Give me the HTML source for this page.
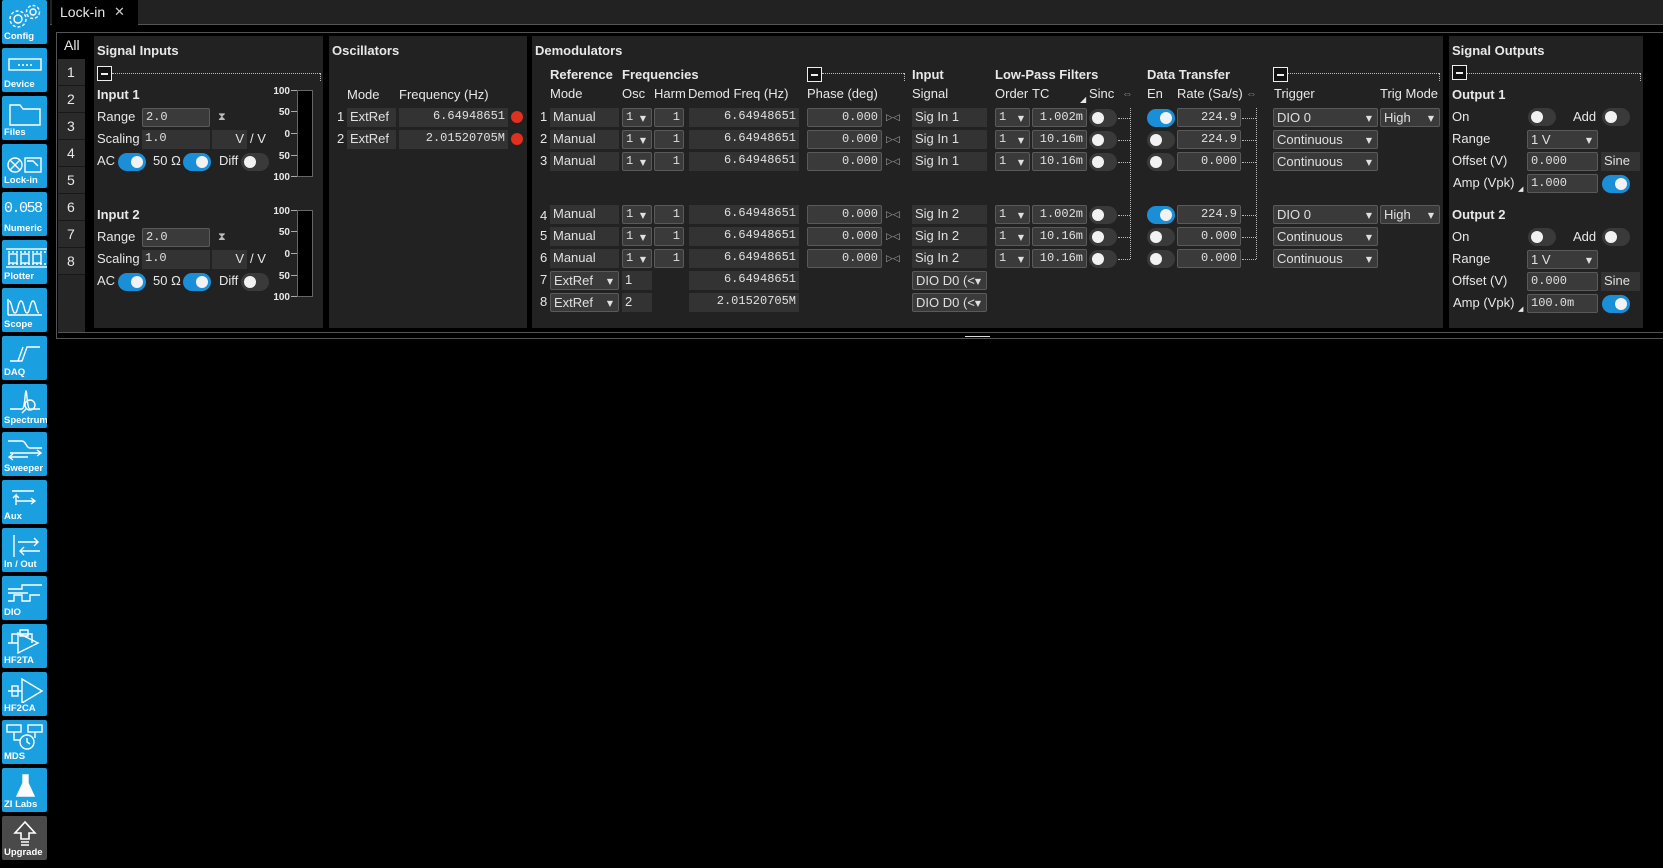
<!DOCTYPE html>
<html><head><meta charset="utf-8"><style>
*{box-sizing:border-box;margin:0;padding:0}
body{width:1663px;height:868px;background:#000;overflow:hidden;position:relative;font-family:"Liberation Sans",Arial,sans-serif;font-size:13px;color:#e8e8e8}
div,span{position:absolute}
.t{white-space:nowrap;line-height:16px}
.b{font-weight:bold}
.f{background:#3a3a3a;border:1px solid #5a5a5a;border-radius:2px;height:19px;font-family:"Liberation Mono",monospace;font-size:12px;line-height:17px;padding:0 3px;color:#e0e0e0;white-space:nowrap;overflow:hidden}
.s{font-family:"Liberation Sans",Arial,sans-serif;font-size:13px}
.p{background:#333;height:19px;line-height:17px;padding:0 3px;white-space:nowrap;color:#e0e0e0}
.m{font-family:"Liberation Mono",monospace;font-size:12px}
.r{text-align:right}
.dd:after{content:"▼";position:absolute;right:5px;top:1px;font-size:8px;font-family:"DejaVu Sans",sans-serif;background:inherit}
.tg{width:28px;height:18px;border-radius:9px;background:#3a3a3a}
.tg:after{content:"";position:absolute;top:3px;left:3px;width:12px;height:12px;border-radius:6px;background:#f2f2f2}
.on{background:#1a8fd8}
.on:after{left:13px}
.pn{background:#222}
.cb{width:15px;height:15px;border:1.5px solid #eee;background:#111}
.cb:after{content:"";position:absolute;left:3px;top:6px;width:7px;height:1.5px;background:#eee}
.dl{border-top:1px dotted #bbb;height:0}
.dv{border-left:1px dotted #bbb;width:0}
.ic{left:2px;width:45px;height:44px;background:#1a9fe0;border-radius:2px;overflow:hidden}
.ic span.l{left:2px;bottom:2px;font-size:9.5px;font-weight:bold;color:#fff;line-height:10px}
.ic svg{position:absolute;left:4px;top:3px}
.dot{width:12px;height:12px;border-radius:6px;background:#e03020}
.ax{font-size:10px;font-weight:bold;text-align:right;width:20px}
</style></head><body>
<!-- sidebar -->
<div class="ic" style="top:0"><svg width="38" height="28" fill="none" stroke="#fff" stroke-width="1.4"><circle cx="12" cy="16" r="4"/><circle cx="12" cy="16" r="8" stroke-dasharray="3 2"/><circle cx="27" cy="9" r="3"/><circle cx="27" cy="9" r="6.5" stroke-dasharray="3 2"/></svg><span class="l">Config</span></div>
<div class="ic" style="top:48px"><svg width="38" height="28" fill="none" stroke="#fff" stroke-width="1.4"><rect x="3" y="8" width="32" height="11"/><path d="M12 14h2M16 14h2M20 14h2M24 14h2"/></svg><span class="l">Device</span></div>
<div class="ic" style="top:96px"><svg width="38" height="28" fill="none" stroke="#fff" stroke-width="1.4"><path d="M4 6h10l3 4h17v16H4z"/></svg><span class="l">Files</span></div>
<div class="ic" style="top:144px"><svg width="38" height="28" fill="none" stroke="#fff" stroke-width="1.4"><circle cx="9" cy="18" r="7"/><path d="M4 13l10 10M14 13L4 23"/><rect x="19" y="11" width="16" height="14"/><path d="M21 14h6l5 5"/></svg><span class="l">Lock-in</span></div>
<div class="ic" style="top:192px"><span style="left:2px;top:8px;font-family:'Liberation Mono',monospace;font-size:15px;color:#fff;letter-spacing:-1.5px">0.058</span><span class="l">Numeric</span></div>
<div class="ic" style="top:240px"><svg width="42" height="28" fill="none" stroke="#fff" stroke-width="1.4"><rect x="-2" y="6" width="44" height="18"/><path d="M-2 9h44M-2 21h44" stroke-dasharray="2 2"/><rect x="3" y="11" width="8" height="9"/><rect x="15" y="11" width="8" height="9"/><rect x="27" y="11" width="8" height="9"/></svg><span class="l">Plotter</span></div>
<div class="ic" style="top:288px"><svg width="38" height="28" fill="none" stroke="#fff" stroke-width="1.4"><path d="M2 24V8M2 24h34M3 10c3 0 3 12 6 12s3-12 6-12 3 12 6 12 3-12 6-12 3 12 6 12"/></svg><span class="l">Scope</span></div>
<div class="ic" style="top:336px"><svg width="38" height="28" fill="none" stroke="#fff" stroke-width="1.4"><path d="M4 22h12l5-14h13M12 22l5-14"/></svg><span class="l">DAQ</span></div>
<div class="ic" style="top:384px"><svg width="38" height="28" fill="none" stroke="#fff" stroke-width="1.4"><path d="M4 22h12c3 0 3-18 4-18s1 18 4 18h10"/><circle cx="24" cy="18" r="5"/><path d="M20 22l-4 4"/></svg><span class="l">Spectrum</span></div>
<div class="ic" style="top:432px"><svg width="38" height="28" fill="none" stroke="#fff" stroke-width="1.4"><path d="M2 6h14c4 0 4 7 8 7h12M4 18h30M4 22h18"/><path d="M31 15l4 3-4 3M7 19l-4 3 4 3"/></svg><span class="l">Sweeper</span></div>
<div class="ic" style="top:480px"><svg width="38" height="28" fill="none" stroke="#fff" stroke-width="1.4"><path d="M6 8h22M10 22v-10l-3 3M10 12l3 3M10 18h18M25 15l4 3-4 3"/></svg><span class="l">Aux</span></div>
<div class="ic" style="top:528px"><svg width="38" height="28" fill="none" stroke="#fff" stroke-width="1.4"><path d="M8 4v22M12 11h20M28 7l4 4-4 4M14 20h20M18 16l-4 4 4 4"/></svg><span class="l">In / Out</span></div>
<div class="ic" style="top:576px"><svg width="38" height="28" fill="none" stroke="#fff" stroke-width="1.4"><path d="M2 10h14v-4h20M2 14h20M2 22h6v-6h8v6h8v-6h10"/></svg><span class="l">DIO</span></div>
<div class="ic" style="top:624px"><svg width="38" height="28" fill="none" stroke="#fff" stroke-width="1.4"><path d="M12 6v20l20-10zM2 16h10M6 16v-9h20v9M14 3h8v6h-8z"/></svg><span class="l">HF2TA</span></div>
<div class="ic" style="top:672px"><svg width="38" height="28" fill="none" stroke="#fff" stroke-width="1.4"><path d="M16 4v24l20-12zM2 16h14"/><rect x="6" y="11" width="6" height="10"/></svg><span class="l">HF2CA</span></div>
<div class="ic" style="top:720px"><svg width="38" height="28" fill="none" stroke="#fff" stroke-width="1.4"><rect x="1" y="2" width="14" height="7"/><rect x="22" y="2" width="14" height="7"/><circle cx="21" cy="19" r="7"/><path d="M21 15v4l3 2M8 9v8h6M29 9v6"/></svg><span class="l">MDS</span></div>
<div class="ic" style="top:768px"><svg width="38" height="28" fill="none" stroke="#fff" stroke-width="1.4"><path d="M17 4h5v8l6 13H11l6-13z" fill="#fff"/></svg><span class="l">ZI Labs</span></div>
<div class="ic" style="top:816px;background:#4a4a4a"><svg width="38" height="28" fill="none" stroke="#fff" stroke-width="1.6"><path d="M19 3l-10 11h6v6h8v-6h6zM15 23h8M15 26h8"/></svg><span class="l">Upgrade</span></div>

<!-- tab bar -->
<div style="left:50px;top:0;width:1613px;height:25px;background:#222;border-bottom:1px solid #555"></div>
<div style="left:52px;top:0;width:86px;height:26px;background:#000"></div>
<span class="t" style="left:60px;top:4px;font-size:14px">Lock-in</span>
<span class="t" style="left:114px;top:4px;font-size:13px;color:#ccc">✕</span>
<div style="left:56px;top:32px;width:1607px;height:307px;border-top:1px solid #555;border-bottom:1px solid #555;border-left:1px solid #555;background:#000"></div>
<div style="left:58px;top:332px;width:1605px;height:1px;background:#555"></div>
<div style="left:965px;top:336px;width:25px;height:1px;background:#ddd"></div>

<!-- number column -->
<div style="left:58px;top:33px;width:27px;height:299px;background:#252525"></div>
<div style="left:58px;top:33px;width:27px;height:26px;background:#000"></div>
<span class="t" style="left:64px;top:37px;font-size:14px">All</span>
<div style="left:58px;top:59px;width:27px;height:216px;background:#2a2a2a"></div>
<span class="t" style="left:67px;top:64px;font-size:14px">1</span>
<span class="t" style="left:67px;top:91px;font-size:14px">2</span>
<span class="t" style="left:67px;top:118px;font-size:14px">3</span>
<span class="t" style="left:67px;top:145px;font-size:14px">4</span>
<span class="t" style="left:67px;top:172px;font-size:14px">5</span>
<span class="t" style="left:67px;top:199px;font-size:14px">6</span>
<span class="t" style="left:67px;top:226px;font-size:14px">7</span>
<span class="t" style="left:67px;top:253px;font-size:14px">8</span>
<div style="left:58px;top:85px;width:27px;height:1px;background:#181818;box-shadow:0 27px #181818,0 54px #181818,0 81px #181818,0 108px #181818,0 135px #181818,0 162px #181818,0 189px #181818"></div>

<!-- Signal Inputs -->
<div class="pn" style="left:94px;top:36px;width:229px;height:292px"></div>
<span class="t b" style="left:97px;top:43px">Signal Inputs</span>
<div class="cb" style="left:97px;top:66px"></div>
<div class="dl" style="left:112px;top:73px;width:208px"></div><div class="dv" style="left:320px;top:73px;height:8px"></div>

<span class="t b" style="left:97px;top:87px">Input 1</span>
<span class="t" style="left:97px;top:109px">Range</span><div class="f m" style="left:142px;top:108px;width:68px">2.0</div><span class="t" style="left:218px;top:109px;font-size:11px;color:#bbb">⧗</span>
<span class="t" style="left:97px;top:131px">Scaling</span><div class="p m" style="left:142px;top:130px;width:68px">1.0</div><div class="p r" style="left:212px;top:130px;width:35px">V</div><span class="t" style="left:250px;top:131px">/ V</span>
<span class="t" style="left:97px;top:153px">AC</span><div class="tg on" style="left:118px;top:153px"></div><span class="t" style="left:153px;top:153px">50 Ω</span><div class="tg on" style="left:183px;top:153px"></div><span class="t" style="left:219px;top:153px">Diff</span><div class="tg" style="left:241px;top:153px"></div>
<span class="t ax" style="left:270px;top:84px">100</span><span class="t ax" style="left:270px;top:105px">50</span><span class="t ax" style="left:270px;top:127px">0</span><span class="t ax" style="left:270px;top:149px">50</span><span class="t ax" style="left:270px;top:170px">100</span>
<div style="left:297px;top:90px;width:16px;height:87px;background:#000;border:1px solid #666"></div>
<div style="left:291px;top:90px;width:6px;height:1px;background:#aaa;box-shadow:0 21px #aaa,0 43px #aaa,0 65px #aaa,0 86px #aaa"></div>

<span class="t b" style="left:97px;top:207px">Input 2</span>
<span class="t" style="left:97px;top:229px">Range</span><div class="f m" style="left:142px;top:228px;width:68px">2.0</div><span class="t" style="left:218px;top:229px;font-size:11px;color:#bbb">⧗</span>
<span class="t" style="left:97px;top:251px">Scaling</span><div class="p m" style="left:142px;top:250px;width:68px">1.0</div><div class="p r" style="left:212px;top:250px;width:35px">V</div><span class="t" style="left:250px;top:251px">/ V</span>
<span class="t" style="left:97px;top:273px">AC</span><div class="tg on" style="left:118px;top:273px"></div><span class="t" style="left:153px;top:273px">50 Ω</span><div class="tg on" style="left:183px;top:273px"></div><span class="t" style="left:219px;top:273px">Diff</span><div class="tg" style="left:241px;top:273px"></div>
<span class="t ax" style="left:270px;top:204px">100</span><span class="t ax" style="left:270px;top:225px">50</span><span class="t ax" style="left:270px;top:247px">0</span><span class="t ax" style="left:270px;top:269px">50</span><span class="t ax" style="left:270px;top:290px">100</span>
<div style="left:297px;top:210px;width:16px;height:87px;background:#000;border:1px solid #666"></div>
<div style="left:291px;top:210px;width:6px;height:1px;background:#aaa;box-shadow:0 21px #aaa,0 43px #aaa,0 65px #aaa,0 86px #aaa"></div>

<!-- Oscillators -->
<div class="pn" style="left:329px;top:36px;width:198px;height:292px"></div>
<span class="t b" style="left:332px;top:43px">Oscillators</span>
<span class="t" style="left:347px;top:87px">Mode</span><span class="t" style="left:399px;top:87px">Frequency (Hz)</span>
<span class="t" style="left:337px;top:109px">1</span><div class="p" style="left:347px;top:108px;width:49px">ExtRef</div><div class="p m r" style="left:399px;top:108px;width:109px">6.64948651</div><div class="dot" style="left:511px;top:111px"></div>
<span class="t" style="left:337px;top:131px">2</span><div class="p" style="left:347px;top:130px;width:49px">ExtRef</div><div class="p m r" style="left:399px;top:130px;width:109px">2.01520705M</div><div class="dot" style="left:511px;top:133px"></div>

<!-- Demodulators -->
<div class="pn" style="left:532px;top:36px;width:911px;height:292px"></div>
<span class="t b" style="left:535px;top:43px">Demodulators</span>
<span class="t b" style="left:550px;top:67px">Reference</span><span class="t b" style="left:622px;top:67px">Frequencies</span>
<span class="t" style="left:550px;top:86px">Mode</span><span class="t" style="left:622px;top:86px">Osc</span><span class="t" style="left:654px;top:86px">Harm</span><span class="t" style="left:688px;top:86px">Demod Freq (Hz)</span><span class="t" style="left:807px;top:86px">Phase (deg)</span>
<div class="cb" style="left:807px;top:67px"></div><div class="dl" style="left:822px;top:73px;width:82px"></div><div class="dv" style="left:904px;top:73px;height:8px"></div>
<span class="t b" style="left:912px;top:67px">Input</span><span class="t" style="left:912px;top:86px">Signal</span>
<span class="t b" style="left:995px;top:67px">Low-Pass Filters</span><span class="t" style="left:995px;top:86px">Order</span><span class="t" style="left:1032px;top:86px">TC</span><span class="t" style="left:1080px;top:92px;font-size:8px">◢</span><span class="t" style="left:1089px;top:86px">Sinc</span><span class="t" style="left:1122px;top:86px;color:#888;font-size:11px">⇔</span>
<span class="t b" style="left:1147px;top:67px">Data Transfer</span><span class="t" style="left:1147px;top:86px">En</span><span class="t" style="left:1177px;top:86px">Rate (Sa/s)</span><span class="t" style="left:1246px;top:86px;color:#888;font-size:11px">⇔</span>
<div class="cb" style="left:1273px;top:67px"></div><div class="dl" style="left:1288px;top:73px;width:151px"></div><div class="dv" style="left:1439px;top:73px;height:8px"></div>
<span class="t" style="left:1274px;top:86px">Trigger</span><span class="t" style="left:1380px;top:86px">Trig Mode</span>

<!-- Row 1 -->
<span class="t" style="left:540px;top:109px">1</span><div class="p" style="left:550px;top:108px;width:69px">Manual</div><div class="f dd m" style="left:622px;top:108px;width:30px">1</div><div class="f m r" style="left:654px;top:108px;width:30px">1</div><div class="p m r" style="left:689px;top:108px;width:110px">6.64948651</div><div class="f m r" style="left:807px;top:108px;width:75px">0.000</div><span class="t" style="left:886px;top:109px;font-size:9px;color:#aaa">▷◁</span>
<div class="p" style="left:912px;top:108px;width:75px">Sig In 1</div><div class="f dd m" style="left:995px;top:108px;width:35px">1</div><div class="f m r" style="left:1032px;top:108px;width:55px">1.002m</div><div class="tg" style="left:1089px;top:109px"></div>
<div class="tg on" style="left:1147px;top:109px"></div><div class="f m r" style="left:1177px;top:108px;width:64px">224.9</div>
<div class="f dd s" style="left:1273px;top:108px;width:105px">DIO 0</div><div class="f dd s" style="left:1380px;top:108px;width:60px">High</div>
<!-- Row 2 -->
<span class="t" style="left:540px;top:131px">2</span><div class="p" style="left:550px;top:130px;width:69px">Manual</div><div class="f dd m" style="left:622px;top:130px;width:30px">1</div><div class="f m r" style="left:654px;top:130px;width:30px">1</div><div class="p m r" style="left:689px;top:130px;width:110px">6.64948651</div><div class="f m r" style="left:807px;top:130px;width:75px">0.000</div><span class="t" style="left:886px;top:131px;font-size:9px;color:#aaa">▷◁</span>
<div class="p" style="left:912px;top:130px;width:75px">Sig In 1</div><div class="f dd m" style="left:995px;top:130px;width:35px">1</div><div class="f m r" style="left:1032px;top:130px;width:55px">10.16m</div><div class="tg" style="left:1089px;top:131px"></div>
<div class="tg" style="left:1147px;top:131px"></div><div class="f m r" style="left:1177px;top:130px;width:64px">224.9</div>
<div class="f dd s" style="left:1273px;top:130px;width:105px">Continuous</div>
<!-- Row 3 -->
<span class="t" style="left:540px;top:153px">3</span><div class="p" style="left:550px;top:152px;width:69px">Manual</div><div class="f dd m" style="left:622px;top:152px;width:30px">1</div><div class="f m r" style="left:654px;top:152px;width:30px">1</div><div class="p m r" style="left:689px;top:152px;width:110px">6.64948651</div><div class="f m r" style="left:807px;top:152px;width:75px">0.000</div><span class="t" style="left:886px;top:153px;font-size:9px;color:#aaa">▷◁</span>
<div class="p" style="left:912px;top:152px;width:75px">Sig In 1</div><div class="f dd m" style="left:995px;top:152px;width:35px">1</div><div class="f m r" style="left:1032px;top:152px;width:55px">10.16m</div><div class="tg" style="left:1089px;top:153px"></div>
<div class="tg" style="left:1147px;top:153px"></div><div class="f m r" style="left:1177px;top:152px;width:64px">0.000</div>
<div class="f dd s" style="left:1273px;top:152px;width:105px">Continuous</div>
<!-- Row 4 -->
<span class="t" style="left:540px;top:208px">4</span><div class="p" style="left:550px;top:205px;width:69px">Manual</div><div class="f dd m" style="left:622px;top:205px;width:30px">1</div><div class="f m r" style="left:654px;top:205px;width:30px">1</div><div class="p m r" style="left:689px;top:205px;width:110px">6.64948651</div><div class="f m r" style="left:807px;top:205px;width:75px">0.000</div><span class="t" style="left:886px;top:206px;font-size:9px;color:#aaa">▷◁</span>
<div class="p" style="left:912px;top:205px;width:75px">Sig In 2</div><div class="f dd m" style="left:995px;top:205px;width:35px">1</div><div class="f m r" style="left:1032px;top:205px;width:55px">1.002m</div><div class="tg" style="left:1089px;top:206px"></div>
<div class="tg on" style="left:1147px;top:206px"></div><div class="f m r" style="left:1177px;top:205px;width:64px">224.9</div>
<div class="f dd s" style="left:1273px;top:205px;width:105px">DIO 0</div><div class="f dd s" style="left:1380px;top:205px;width:60px">High</div>
<!-- Row 5 -->
<span class="t" style="left:540px;top:228px">5</span><div class="p" style="left:550px;top:227px;width:69px">Manual</div><div class="f dd m" style="left:622px;top:227px;width:30px">1</div><div class="f m r" style="left:654px;top:227px;width:30px">1</div><div class="p m r" style="left:689px;top:227px;width:110px">6.64948651</div><div class="f m r" style="left:807px;top:227px;width:75px">0.000</div><span class="t" style="left:886px;top:228px;font-size:9px;color:#aaa">▷◁</span>
<div class="p" style="left:912px;top:227px;width:75px">Sig In 2</div><div class="f dd m" style="left:995px;top:227px;width:35px">1</div><div class="f m r" style="left:1032px;top:227px;width:55px">10.16m</div><div class="tg" style="left:1089px;top:228px"></div>
<div class="tg" style="left:1147px;top:228px"></div><div class="f m r" style="left:1177px;top:227px;width:64px">0.000</div>
<div class="f dd s" style="left:1273px;top:227px;width:105px">Continuous</div>
<!-- Row 6 -->
<span class="t" style="left:540px;top:250px">6</span><div class="p" style="left:550px;top:249px;width:69px">Manual</div><div class="f dd m" style="left:622px;top:249px;width:30px">1</div><div class="f m r" style="left:654px;top:249px;width:30px">1</div><div class="p m r" style="left:689px;top:249px;width:110px">6.64948651</div><div class="f m r" style="left:807px;top:249px;width:75px">0.000</div><span class="t" style="left:886px;top:250px;font-size:9px;color:#aaa">▷◁</span>
<div class="p" style="left:912px;top:249px;width:75px">Sig In 2</div><div class="f dd m" style="left:995px;top:249px;width:35px">1</div><div class="f m r" style="left:1032px;top:249px;width:55px">10.16m</div><div class="tg" style="left:1089px;top:250px"></div>
<div class="tg" style="left:1147px;top:250px"></div><div class="f m r" style="left:1177px;top:249px;width:64px">0.000</div>
<div class="f dd s" style="left:1273px;top:249px;width:105px">Continuous</div>
<!-- Row 7,8 -->
<span class="t" style="left:540px;top:272px">7</span><div class="f dd s" style="left:550px;top:271px;width:69px">ExtRef</div><div class="p" style="left:622px;top:271px;width:30px">1</div><div class="p m r" style="left:689px;top:271px;width:110px">6.64948651</div><div class="f dd s" style="left:912px;top:271px;width:75px">DIO D0 (&lt;</div>
<span class="t" style="left:540px;top:294px">8</span><div class="f dd s" style="left:550px;top:293px;width:69px">ExtRef</div><div class="p" style="left:622px;top:293px;width:30px">2</div><div class="p m r" style="left:689px;top:293px;width:110px">2.01520705M</div><div class="f dd s" style="left:912px;top:293px;width:75px">DIO D0 (&lt;</div>
<!-- dotted connectors -->
<div class="dl" style="left:1118px;top:118px;width:12px"></div>
<div class="dl" style="left:1118px;top:140px;width:12px"></div><div class="dl" style="left:1118px;top:162px;width:12px"></div><div class="dl" style="left:1118px;top:215px;width:12px"></div><div class="dl" style="left:1118px;top:237px;width:12px"></div><div class="dl" style="left:1118px;top:259px;width:12px"></div>
<div class="dv" style="left:1130px;top:108px;height:151px"></div>
<div class="dl" style="left:1242px;top:118px;width:14px"></div><div class="dl" style="left:1242px;top:140px;width:14px"></div><div class="dl" style="left:1242px;top:162px;width:14px"></div><div class="dl" style="left:1242px;top:215px;width:14px"></div><div class="dl" style="left:1242px;top:237px;width:14px"></div><div class="dl" style="left:1242px;top:259px;width:14px"></div>
<div class="dv" style="left:1256px;top:108px;height:151px"></div>

<!-- Signal Outputs -->
<div class="pn" style="left:1449px;top:36px;width:194px;height:292px"></div>
<span class="t b" style="left:1452px;top:43px">Signal Outputs</span>
<div class="cb" style="left:1452px;top:65px"></div><div class="dl" style="left:1467px;top:73px;width:173px"></div><div class="dv" style="left:1640px;top:73px;height:8px"></div>
<span class="t b" style="left:1452px;top:87px">Output 1</span>
<span class="t" style="left:1452px;top:109px">On</span><div class="tg" style="left:1528px;top:108px"></div><span class="t" style="left:1573px;top:109px">Add</span><div class="tg" style="left:1602px;top:108px"></div>
<span class="t" style="left:1452px;top:131px">Range</span><div class="f dd s" style="left:1527px;top:130px;width:71px">1 V</div>
<span class="t" style="left:1452px;top:153px">Offset (V)</span><div class="f m" style="left:1527px;top:152px;width:71px">0.000</div><div class="p" style="left:1601px;top:152px;width:39px">Sine</div>
<span class="t" style="left:1453px;top:175px">Amp (Vpk)</span><span class="t" style="left:1518px;top:182px;font-size:7px">◢</span><div class="f m" style="left:1527px;top:174px;width:71px">1.000</div><div class="tg on" style="left:1602px;top:175px"></div>
<span class="t b" style="left:1452px;top:207px">Output 2</span>
<span class="t" style="left:1452px;top:229px">On</span><div class="tg" style="left:1528px;top:228px"></div><span class="t" style="left:1573px;top:229px">Add</span><div class="tg" style="left:1602px;top:228px"></div>
<span class="t" style="left:1452px;top:251px">Range</span><div class="f dd s" style="left:1527px;top:250px;width:71px">1 V</div>
<span class="t" style="left:1452px;top:273px">Offset (V)</span><div class="f m" style="left:1527px;top:272px;width:71px">0.000</div><div class="p" style="left:1601px;top:272px;width:39px">Sine</div>
<span class="t" style="left:1453px;top:295px">Amp (Vpk)</span><span class="t" style="left:1518px;top:302px;font-size:7px">◢</span><div class="f m" style="left:1527px;top:294px;width:71px">100.0m</div><div class="tg on" style="left:1602px;top:295px"></div>
</body></html>
